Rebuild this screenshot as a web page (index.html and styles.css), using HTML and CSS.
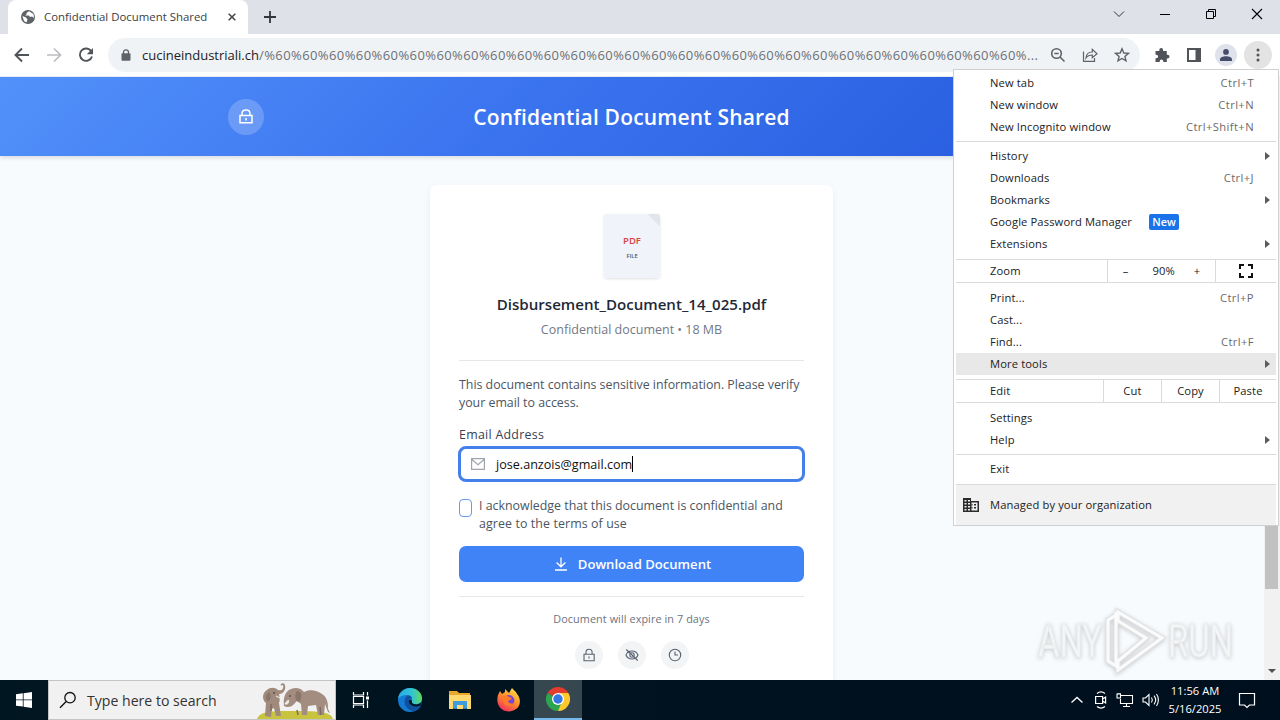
FILE: index.html
```html
<!DOCTYPE html>
<html lang="en">
<head>
  <meta charset="UTF-8" />
  <title>Confidential Document Shared</title>
  <link rel="stylesheet" href="styles.css">
</head>
<body>
  <div class="tabstrip">
    <div class="tab">
      <svg class="globe" width="14" height="14" viewBox="0 0 14 14"><circle cx="7" cy="7" r="7" fill="#5f6368"/><path d="M8 1.2 5.5 3v1.5L4 5.5h4l1 1.5 2-.5 2 1.5-.5-4zM1.4 6 5 7.5l1.5 2L5.500 12.500 3 11z" fill="#fff"/></svg>
      <span class="tab-title">Confidential Document Shared</span>
      <svg class="tab-close" width="8" height="8" viewBox="0 0 8 8"><path d="M.7.700 7.300 7.300M7.300.700.700 7.300" stroke="#45484c" stroke-width="1.6"/></svg>
    </div>
    <svg class="new-tab" width="12" height="12" viewBox="0 0 12 12"><path d="M6 0v12M0 6h12" stroke="#35363a" stroke-width="1.8"/></svg>
    <div class="window-buttons">
      <svg width="12" height="12" viewBox="0 0 12 12"><path d="m1 3.500 5 5 5-5" fill="none" stroke="#333"/></svg>
      <svg width="12" height="12" viewBox="0 0 12 12"><path d="M1 6.500h10" stroke="#000"/></svg>
      <svg width="12" height="12" viewBox="0 0 12 12"><path d="M1.500 3.500h7v7h-7zM3.500 3.500v-2h7v7h-2" fill="none" stroke="#000"/></svg>
      <svg width="12" height="12" viewBox="0 0 12 12"><path d="m1 1 10 10M11 1 1 11" stroke="#000" stroke-width="1.100"/></svg>
    </div>
  </div>

  <div class="toolbar">
    <div class="nav">
      <svg width="16" height="16" viewBox="0 0 16 16"><path d="M15 8H2M8 1.500 1.500 8 8 14.500" fill="none" stroke="#505357" stroke-width="1.900"/></svg>
      <svg width="16" height="16" viewBox="0 0 16 16"><path d="M1 8h13M8 1.500 14.500 8 8 14.500" fill="none" stroke="#bbbdc0" stroke-width="1.700"/></svg>
      <svg width="16" height="16" viewBox="0 0 16 16"><path d="M13.300 4.300A6.200 6.200 0 1 0 14 9.500" fill="none" stroke="#505357" stroke-width="1.900"/><path d="M15 1v6.200H8.800z" fill="#505357"/></svg>
    </div>
    <div class="omnibox">
      <svg class="site-lock" width="10" height="12" viewBox="0 0 10 12"><path d="M2.500 5V3.300a2.500 2.500 0 0 1 5 0V5" fill="none" stroke="#5f6368" stroke-width="1.300"/><rect x=".500" y="4.300" width="9" height="7.400" rx="1" fill="#5f6368"/></svg>
      <div class="url"><span class="host">cucineindustriali.ch</span><span class="path">/%60%60%60%60%60%60%60%60%60%60%60%60%60%60%60%60%60%60%60%60%60%60%60%60%60%60%60%60%...</span></div>
      <div class="omni-icons">
        <svg width="16" height="16" viewBox="0 0 16 16"><circle cx="6.500" cy="6.500" r="4.800" fill="none" stroke="#5f6368" stroke-width="1.600"/><path d="m10 10 4.500 4.500M4.300 6.500h4.400" stroke="#5f6368" stroke-width="1.600"/></svg>
        <svg width="16" height="16" viewBox="0 0 16 16"><path d="M1.500 4.500v9.800h11V11M4 11c.3-4 2.500-6 6.300-6V2.300L15 6.700l-4.700 4V8C7.500 8 5.500 8.800 4 11z" fill="none" stroke="#5f6368" stroke-width="1.200"/></svg>
        <svg width="16" height="16" viewBox="0 0 16 16"><path d="m8 1.800 1.800 4.200 4.600.4-3.500 3 1.100 4.500L8 11.500l-4 2.400 1.100-4.500-3.500-3L6.200 6z" fill="none" stroke="#5f6368" stroke-width="1.400"/></svg>
      </div>
    </div>
    <div class="actions">
      <svg width="16" height="16" viewBox="0 0 16 16"><path d="M1.500 4h3.800V3a1.900 1.900 0 0 1 3.800 0v1h3.700v3.700h.8a1.900 1.900 0 0 1 0 3.800h-.8V15H9.300v-.8a1.800 1.800 0 0 0-3.600 0v.8H1.500v-3.700h.8a1.800 1.800 0 0 0 0-3.600h-.8z" fill="#505458"/></svg>
      <svg width="16" height="16" viewBox="0 0 16 16"><path d="M1 1h14v14H1zM3 3v10h6.500V3z" fill="#505458" fill-rule="evenodd"/></svg>
      <span class="avatar"><svg width="14" height="14" viewBox="0 0 14 14"><circle cx="7" cy="3.900" r="2.900" fill="#474d69"/><path d="M1 13v-1.500C1 9.500 4 8.300 7 8.300s6 1.200 6 3.200V13z" fill="#474d69"/></svg></span>
      <span class="kebab"><svg width="4" height="14" viewBox="0 0 4 14"><circle cx="2" cy="2" r="1.500"/><circle cx="2" cy="7" r="1.500"/><circle cx="2" cy="12" r="1.500"/></svg></span>
    </div>
  </div>

  <div class="viewport">
    <div class="page">
      <header class="page-header">
        <span class="header-lock"><svg width="16" height="16" viewBox="0 0 16 16"><path d="M2 6.500h12v7.300H2zM4 6.500V4.600C4 2.400 5.500 1 8 1s4 1.400 4 3.600v1.900M8 9v2.600" fill="none" stroke="#fff" stroke-width="1.500"/></svg></span>
        <h1>Confidential Document Shared</h1>
      </header>

      <main class="card">
        <div class="file-icon">
          <span class="file-type">PDF</span>
          <span class="file-label">FILE</span>
        </div>
        <h2>Disbursement_Document_14_025.pdf</h2>
        <p class="meta">Confidential document • 18 MB</p>

        <div class="form">
          <p class="intro">This document contains sensitive information. Please verify<br>your email to access.</p>
          <div class="label">Email Address</div>
          <div class="email">
            <svg width="14" height="14" viewBox="0 0 14 14"><path d="M.600 1.600h12.800v10.800H.600zM.600 2.200 7 7.600l6.400-5.400" fill="none" stroke="#a0a4ab" stroke-width="1.200"/></svg>
            <span class="email-value">jose.anzois@gmail.com</span><span class="caret"></span>
          </div>
          <div class="consent">
            <span class="checkbox"></span>
            <p>I acknowledge that this document is confidential and<br><span class="terms">agree to the terms of use</span></p>
          </div>
          <button class="download">
            <svg width="14" height="14" viewBox="0 0 14 14"><path d="M7 .500v9M2.600 5.500 7 9.800l4.400-4.300M1 13h12" fill="none" stroke="#fff" stroke-width="1.300"/></svg>
            <span>Download Document</span>
          </button>
        </div>

        <p class="expire">Document will expire in 7 days</p>
        <div class="badges">
          <span><svg width="14" height="14" viewBox="0 0 14 14"><path d="M2 6.200h10.200v6.600H2zM4 6V4.200C4 2.300 5.100 1.200 7 1.200s3.100 1.100 3.100 3V6M7 8.600v2"/></svg></span>
          <span><svg width="14" height="14" viewBox="0 0 14 14"><path d="M1 7c2-5.300 10-5.300 12 0-2 5.300-10 5.300-12 0zM1.300 1.500l11.400 11"/><circle cx="7" cy="7" r="2.200"/></svg></span>
          <span><svg width="14" height="14" viewBox="0 0 14 14"><circle cx="7" cy="7" r="5.700"/><path d="M7 3.500V7h3"/></svg></span>
        </div>
      </main>
    </div>
    <div class="scrollbar">
      <div class="thumb"></div>
      <div class="scroll-down"></div>
    </div>
  </div>

  <svg class="watermark" width="216" height="72" viewBox="0 0 216 72">
    <g class="mark-text">
      <text x="4" y="51" textLength="64" lengthAdjust="spacingAndGlyphs">ANY</text>
      <text x="134" y="51" textLength="65" lengthAdjust="spacingAndGlyphs">RUN</text>
    </g>
    <path class="mark-edge" d="M82 6v54l-8-5V14l8-5M84 6l44 26-44 32v-9l28-23-28-17z"/>
    <path class="mark-line" d="M82 6v54l-8-5V14l8-5M84 6l44 26-44 32v-9l28-23-28-17z"/>
  </svg>

  <div class="menu">
    <div class="group first">
      <div class="row">New tab<kbd>Ctrl+T</kbd></div>
      <div class="row">New window<kbd>Ctrl+N</kbd></div>
      <div class="row">New Incognito window<kbd>Ctrl+Shift+N</kbd></div>
    </div>
    <div class="group second">
      <div class="row">History<i class="arrow"></i></div>
      <div class="row">Downloads<kbd>Ctrl+J</kbd></div>
      <div class="row">Bookmarks<i class="arrow"></i></div>
      <div class="row">Google Password Manager<span class="new">New</span></div>
      <div class="row">Extensions<i class="arrow"></i></div>
    </div>
    <div class="split">
      <span class="split-label">Zoom</span>
      <span class="zoom-controls"><b>–</b><b class="percent">90%</b><b>+</b></span>
      <span class="fullscreen"><svg width="14" height="14" viewBox="0 0 14 14"><path d="M1 5V1h4M9 1h4v4M13 9v4H9M5 13H1V9" fill="none" stroke="#111" stroke-width="2"/></svg></span>
    </div>
    <div class="group">
      <div class="row">Print...<kbd>Ctrl+P</kbd></div>
      <div class="row">Cast...</div>
      <div class="row">Find...<kbd>Ctrl+F</kbd></div>
      <div class="row active">More tools<i class="arrow"></i></div>
    </div>
    <div class="split">
      <span class="split-label">Edit</span>
      <span class="edit-item">Cut</span>
      <span class="edit-item">Copy</span>
      <span class="edit-item">Paste</span>
    </div>
    <div class="group third">
      <div class="row">Settings</div>
      <div class="row">Help<i class="arrow"></i></div>
    </div>
    <div class="group last">
      <div class="row">Exit</div>
    </div>
    <div class="managed">
      <svg width="16" height="14" viewBox="0 0 16 14"><path d="M0 0h8v3h8v11H0z" fill="#2b2b2b"/><path d="M1.500 2h2v1.500h-2zM5 2h2v1.500H5zM1.500 5h2v1.500h-2zM5 5h2v1.500H5zM1.500 8h2v1.500h-2zM5 8h2v1.500H5zM1.500 11h2v1.500h-2zM5 11h2v1.500H5zM8.500 4.500h6v8h-6z" fill="#f1f1f1"/><path d="M8.500 6h1v1.500h-1zM11 6h2v1.500h-2zM8.500 9h1v1.500h-1zM11 9h2v1.500h-2z" fill="#2b2b2b"/></svg>
      <span>Managed by your organization</span>
    </div>
  </div>

  <div class="taskbar">
    <div class="start"><svg width="16" height="16" viewBox="0 0 16 16"><path d="M0 2.300 6.800 1.300v6.200H0zM7.600 1.200 16 0v7.500H7.600zM0 8.300h6.800v6.300L0 13.700zM7.600 8.300H16V16l-8.400-1.200z" fill="#fff"/></svg></div>
    <div class="search">
      <svg width="18" height="18" viewBox="0 0 18 18"><circle cx="11" cy="6.700" r="5.200" fill="none" stroke="#111" stroke-width="1.300"/><path d="M7.200 10.500 1 16.800" stroke="#111" stroke-width="1.400"/></svg>
      <span>Type here to search</span>
      <svg class="elephants" width="78" height="38" viewBox="0 0 78 38">
        <path d="M0 38c3-8 14-8 36-8s38 0 40 8z" fill="#c9c43f"/>
        <path d="M8 35 9 22C4 18 6 11 10 9c3-3 8-3 11 0 4 1 6-1 5-5-2 1-3 0-2-1 3-2 5 1 4 5-1 4-4 5-6 5 1 4 1 7 0 9l2 13h-5l-2-8-2 1-1 8z" fill="#a08a7c"/>
        <path d="M27 24c-1-6 1-14 7-16 5-2 10-1 13 3 5-3 13-2 18 2 6 4 6 10 6 15l2 4-2-1-3-8-1 11h-6l-2-10-8 1-1 9h-5l-1-11-4-3c-3 3-5 6-9 6-3 0-5-1-4-3 2 1 4 1 5-2l-1-2c-2 1-3 3-4 5z" fill="#a28d80"/>
        <path d="M12 11c-3 2-4 6-2 9 4 0 5-5 2-9zM40 10c5 0 6 7 2 11-4-1-5-7-2-11z" fill="#8a766b"/>
        <path d="m40 29 1 5M63 26l1 8M14 23v7" stroke="#806c61" stroke-width="1.500"/>
        <path d="m19 15 4 2M32 19l-2 4" stroke="#eee4d4" stroke-width="1.200"/>
        <circle cx="17" cy="12" r=".8" fill="#322"/><circle cx="33" cy="15" r=".8" fill="#322"/>
      </svg>
    </div>
    <div class="apps">
      <div class="app"><svg width="18" height="16" viewBox="0 0 18 16"><path d="M1.500 0v3h10V0M1.500 16v-3h10v3M1.500 4.500h10v7h-10zM15.500 0v3.500M15.500 8.500V16" fill="none" stroke="#fff" stroke-width="1.200"/><path d="M14 4.500h3v3h-3z" fill="#fff"/></svg></div>
      <div class="app"><svg width="24" height="24" viewBox="0 0 24 24">
        <defs>
          <linearGradient id="edgeTop" x1="0" x2="1"><stop stop-color="#28a9e8"/><stop offset=".6" stop-color="#33c5cf"/><stop offset="1" stop-color="#63d957"/></linearGradient>
        </defs>
        <circle cx="12" cy="12" r="12" fill="#1479d1"/>
        <path d="M0 11C1 4 6 0 12 0c7 0 12 5 12 10 0 4-3 6-6 6-3 0-5-1-4-3 1-3-1-6-5-6-4 0-8 2-9 4z" fill="url(#edgeTop)"/>
        <path d="M9 8c-5 4-2 14 6 15 4 0 6-2 8-5-6 3-12 0-12-5 0-2 1-3 3-3-1-2-3-3-5-2z" fill="#0f519f"/>
        <path d="M11 12c-1 5 5 8 11 6l2-4c-3 3-8 3-10 1 0-2 0-4-3-3z" fill="#001620"/>
      </svg></div>
      <div class="app"><svg width="22" height="20" viewBox="0 0 22 20"><path d="M0 1h8l2 2h11v16H0z" fill="#e9a72b"/><path d="M0 5h22v14H0z" fill="#ffd970"/><path d="M4 11h14v8h-4v-4H8v4H4z" fill="#3f9bdc"/><path d="M4 18h4v1H4zM14 18h4v1h-4z" fill="#277bbd"/></svg></div>
      <div class="app"><svg width="24" height="24" viewBox="0 0 24 24">
        <defs><linearGradient id="fox" x1=".8" y1="0" x2=".2" y2="1"><stop stop-color="#ffe34a"/><stop offset=".45" stop-color="#ff9229"/><stop offset="1" stop-color="#f12862"/></linearGradient></defs>
        <path d="M1 7 3 3l2 3 3-2V1l4 4 3-5c2 3 4 3 5 6 4 4 4 12-1 15-5 4-14 3-17-3C0 15 0 10 1 7z" fill="url(#fox)"/>
        <circle cx="12" cy="12.500" r="5.400" fill="#7447d9"/><path d="M4 9c3-2 6-2 8 0l3 1c-1 2-3 2-4 3 1 3 4 3 6 2-2 5-10 4-11-2z" fill="#ff7b27"/>
      </svg></div>
      <div class="app current"><svg width="24" height="24" viewBox="0 0 24 24">
        <path d="M12 12 1.600 6a12 12 0 0 1 20.800 0z" fill="#e33b2e"/><path d="M12 12 1.600 6A12 12 0 0 0 12 24l5-9z" fill="#2da44e"/><path d="M12 12h5l-5 12A12 12 0 0 0 22.400 6H12z" fill="#fdc92f"/>
        <circle cx="12" cy="12" r="6" fill="#fff"/><circle cx="12" cy="12" r="4.700" fill="#3478e5"/>
      </svg></div>
    </div>
    <div class="tray">
      <svg width="14" height="16" viewBox="0 0 14 16"><path d="m1.500 10.500 5.500-5 5.500 5" fill="none" stroke="#fff" stroke-width="1.300"/></svg>
      <svg width="14" height="18" viewBox="0 0 14 18"><path d="M3 2.500c2.500-2 5.500-2 8 0M3 15.500c2.500 2 5.500 2 8 0M1.600 5.500h7v7h-7zM8.600 8l3-2v6l-3-2" fill="none" stroke="#fff" stroke-width="1.200"/></svg>
      <svg width="18" height="16" viewBox="0 0 18 16"><path d="M5 3.500h11.500v8H4.500V7M10.500 11.500v3M7 14.500h7M1 2v4h3.500V2zM2 1v1M4 1v1" fill="none" stroke="#fff" stroke-width="1.100"/></svg>
      <svg width="18" height="16" viewBox="0 0 18 16"><path d="M1 6h2.500L7 2.500v11L3.500 10H1zM9.500 5.500c1 1.500 1 3.500 0 5M12 3.700c2 2.500 2 6 0 8.600M14.500 2c2.500 3.500 2.500 8.500 0 12" fill="none" stroke="#fff" stroke-width="1.100"/></svg>
      <div class="clock"><span>11:56 AM</span><span>5/16/2025</span></div>
      <svg class="notify" width="18" height="18" viewBox="0 0 18 18"><path d="M1.500 2.500h15v11.500h-5L9 16.500 6.500 14h-5z" fill="none" stroke="#fff" stroke-width="1.200"/></svg>
    </div>
  </div>
</body>
</html>
```
FILE: styles.css
```css
* {
  box-sizing: border-box;
}

body {
  margin: 0;
  width: 1280px;
  height: 720px;
  overflow: hidden;
  position: relative;
  display: flex;
  flex-direction: column;
  font-family: "Open Sans", "Noto Sans", sans-serif;
  font-size: 11.2px;
  color: #202124;
}

svg {
  display: block;
  flex: none;
}

h1, h2, p {
  margin: 0;
  white-space: nowrap;
}

/* browser window */
.tabstrip {
  height: 34px;
  background: #dee1e8;
  display: flex;
  align-items: center;
  padding-left: 8px;
}

.tab {
  width: 240px;
  height: 34px;
  background: #fff;
  border-radius: 8px 8px 0 0;
  display: flex;
  align-items: center;
  padding: 0 12px 0 13px;
}

.tab-title {
  margin: -1px 0 0 9px;
  width: 184px;
  font-size: 11.4px;
  white-space: nowrap;
  color: #3c4043;
}

.new-tab {
  margin-left: 16px;
}

.window-buttons {
  margin: -6px 17px 0 auto;
  display: flex;
  gap: 34px;
}

.toolbar {
  height: 43px;
  background: #fff;
  border-bottom: 1px solid #e4ebf2;
  display: flex;
  align-items: center;
  padding: 0 7px 0 14px;
}

.nav {
  display: flex;
  gap: 16px;
}

.omnibox {
  margin-left: 14px;
  width: 1032px;
  height: 34px;
  border-radius: 17px;
  background: #f0f3f6;
  display: flex;
  align-items: center;
  padding: 0 10px 0 13px;
}

.url {
  margin-left: 11px;
  width: 908px;
  font-size: 13px;
  white-space: nowrap;
  color: #6b7075;
}

.host {
  color: #202124;
}

.path {
  letter-spacing: 0.41px;
}

.omni-icons {
  display: flex;
  gap: 16px;
}

.actions {
  margin-left: 14px;
  display: flex;
  align-items: center;
  gap: 16px;
}

.avatar, .kebab {
  display: flex;
  align-items: center;
  justify-content: center;
  border-radius: 50%;
}

.avatar {
  width: 22px;
  height: 22px;
  margin-left: -3px;
  background: #dfe2eb;
}

.kebab {
  width: 28px;
  height: 28px;
  margin-left: -9px;
  background: #e3e3e4;
  fill: #505458;
}

.viewport {
  height: 603px;
  display: flex;
  overflow: hidden;
}

.page {
  width: 1264px;
  background: #f8fbfe;
}

.scrollbar {
  width: 16px;
  background: #f1f1f1;
  display: flex;
  flex-direction: column;
  align-items: center;
  justify-content: space-between;
  padding: 0 1px 7px 0;
}

.thumb {
  width: 13px;
  height: 512px;
  background: #c1c1c1;
}

.scroll-down {
  border: 4px solid transparent;
  border-top-color: #505050;
  border-bottom: 0;
}

/* shared document page */
.page-header {
  height: 79px;
  background: linear-gradient(135deg, #5291fa, #3b74ef 40%, #2054d8);
  box-shadow: 0 2px 4px rgba(0,0,0,0.12);
  display: grid;
  grid-template-columns: 228px 1fr 264px;
  align-items: center;
  position: relative;
}

.header-lock {
  grid-column: 2;
  grid-row: 1;
  width: 36px;
  height: 36px;
  border-radius: 50%;
  background: rgba(255,255,255,0.2);
  display: flex;
  align-items: center;
  justify-content: center;
}

.page-header h1 {
  grid-column: 1 / -1;
  grid-row: 1;
  padding-right: 1px;
  text-align: center;
  font-size: 21px;
  letter-spacing: 0.18px;
  font-weight: 600;
  color: #fff;
}

.card {
  width: 403px;
  height: 560px;
  margin: 29px 0 0 430px;
  padding: 29px;
  background: #fff;
  border-radius: 7px;
  box-shadow: 0 3px 8px rgba(30,60,100,0.07);
  display: flex;
  flex-direction: column;
  align-items: center;
}

.file-icon {
  width: 56px;
  height: 64px;
  margin-left: 1px;
  background: linear-gradient(225deg, #e2e5e9 9px, #f0f3f9 9px);
  border-radius: 3px;
  box-shadow: 0 1px 3px rgba(0,0,0,0.12);
  display: flex;
  flex-direction: column;
  align-items: center;
  padding-top: 20px;
}

.file-type {
  font-size: 9.5px;
  line-height: 14px;
  font-weight: 600;
  color: #d64545;
}

.file-label {
  font-size: 5.8px;
  line-height: 16px;
  font-weight: 600;
  color: #4b5563;
}

.card h2 {
  margin-top: 15px;
  line-height: 22px;
  font-size: 15.1px;
  font-weight: 600;
  color: #1f2937;
}

.meta {
  margin-top: 6px;
  line-height: 18px;
  font-size: 12.5px;
  color: #737985;
}

.form {
  width: 345px;
  margin-top: 21px;
  padding: 15px 0 14px;
  border-top: 1px solid #e5e7eb;
  border-bottom: 1px solid #e5e7eb;
}

.intro, .consent p {
  font-size: 12.4px;
  line-height: 18px;
  color: #4b5563;
}

.intro {
  letter-spacing: -0.02px;
}

.label {
  margin-top: 14px;
  line-height: 18px;
  font-size: 12.4px;
  letter-spacing: 0.28px;
  color: #374151;
}

.email {
  height: 36px;
  margin: 2px -1px 0;
  border: 3px solid #4480ea;
  border-radius: 8px;
  display: flex;
  align-items: center;
  padding-left: 10px;
  color: #111;
}

.email-value {
  margin-left: 11px;
  font-size: 12.6px;
}

.caret {
  width: 1px;
  height: 16px;
  background: #000;
}

.consent {
  margin-top: 15px;
  display: flex;
  gap: 7px;
}

.terms {
  letter-spacing: 0.1px;
}

.checkbox {
  width: 13px;
  height: 18px;
  margin-top: 2px;
  border: 1px solid #6a9be8;
  border-radius: 4px;
  flex: none;
}

.download {
  width: 100%;
  height: 36px;
  margin-top: 13px;
  padding: 0 0 0 2px;
  border: none;
  border-radius: 7px;
  background: #3f83f7;
  color: #fff;
  font-family: inherit;
  font-size: 13.1px;
  font-weight: 600;
  display: flex;
  align-items: center;
  justify-content: center;
  gap: 10px;
}

.expire {
  margin-top: 13px;
  line-height: 18px;
  font-size: 10.8px;
  letter-spacing: 0.1px;
  color: #6b7280;
}

.badges {
  margin-top: 13px;
  display: flex;
  gap: 15px;
}

.badges span {
  width: 28px;
  height: 28px;
  border-radius: 50%;
  background: #f3f4f6;
  display: flex;
  align-items: center;
  justify-content: center;
}

.badges svg {
  fill: none;
  stroke: #596170;
  stroke-width: 1.1;
}

.watermark {
  position: absolute;
  left: 1034px;
  top: 606px;
  filter: drop-shadow(0 1px 2px rgba(0,0,0,0.2));
}

.mark-text {
  font-family: Roboto, sans-serif;
  font-size: 47px;
  fill: #f4f5f6;
  stroke: #e9ebec;
  stroke-width: 1;
}

.mark-edge {
  fill: none;
  stroke: #dfe1e3;
  stroke-width: 5;
}

.mark-line {
  fill: none;
  stroke: #fbfbfb;
  stroke-width: 3;
}

/* browser menu */
.menu {
  position: absolute;
  left: 953px;
  top: 69px;
  width: 326px;
  height: 457px;
  background: #fff;
  border: 1px solid #d0d0d0;
  padding: 2px 2px 0;
  letter-spacing: 0.12px;
}

.group {
  padding: 4px 0;
}

.first {
  padding: 0 0 3px;
}

.second {
  border-top: 1px solid #dadada;
  padding-top: 3px;
}

.third {
  padding-bottom: 3px;
}

.last {
  border-top: 1px solid #dadada;
  padding-top: 3px;
}

.row {
  height: 22px;
  display: flex;
  align-items: center;
  padding: 0 22px 2px 34px;
}

.row kbd {
  margin-left: auto;
  font-family: inherit;
  font-size: 11.2px;
  letter-spacing: 0.4px;
  color: #6a6a6a;
}

.active {
  background: #e8e8e8;
}

.arrow {
  margin: 1px -16px 0 auto;
  border: 4px solid transparent;
  border-left: 5px solid #5c5c5c;
  border-right: 0;
}

.new {
  margin: 1px 0 0 17px;
  width: 30px;
  line-height: 16px;
  border-radius: 2px;
  background: #1a73e8;
  color: #fff;
  font-weight: 600;
  font-size: 10.8px;
  text-align: center;
}

.split {
  height: 24px;
  border-top: 1px solid #dadada;
  border-bottom: 1px solid #dadada;
  display: flex;
}

.split span {
  display: flex;
  align-items: center;
  justify-content: center;
  padding-bottom: 2px;
}

.split .split-label {
  flex: 1;
  justify-content: flex-start;
  padding-left: 34px;
}

.zoom-controls {
  width: 108px;
  border-left: 1px solid #dadada;
}

.zoom-controls b {
  font-weight: 400;
}

.zoom-controls .percent {
  margin: 0 19px 0 24px;
}

.split .fullscreen {
  width: 61px;
  padding-bottom: 0;
  border-left: 1px solid #dadada;
}

.edit-item {
  width: 58px;
  border-left: 1px solid #dadada;
}

.edit-item:last-child {
  width: 57px;
}

.managed {
  height: 41px;
  border-top: 1px solid #dadada;
  background: #f1f1f1;
  display: flex;
  align-items: center;
  gap: 11px;
  padding-left: 7px;
}

.managed span {
  margin-top: -2px;
}

/* taskbar */
.taskbar {
  height: 40px;
  background: linear-gradient(90deg, #001620, #000f1e);
  display: flex;
  color: #fff;
}

.start {
  width: 48px;
  display: flex;
  align-items: center;
  justify-content: center;
}

.search {
  width: 288px;
  background: #f1f1f1;
  border: 1px solid #c4c4c4;
  display: flex;
  align-items: center;
  padding-left: 10px;
  color: #333;
  font-size: 14.1px;
}

.search span {
  margin-left: 10px;
}

.elephants {
  margin-left: auto;
}

.apps {
  display: flex;
}

.app {
  width: 49.5px;
  display: flex;
  align-items: center;
  justify-content: center;
}

.current {
  width: 48px;
  background: #37474f;
  border-bottom: 2px solid #76b9ed;
}

.tray {
  margin-left: auto;
  display: flex;
  align-items: center;
  padding-right: 24px;
  gap: 8px;
}

.tray svg:first-child {
  margin-right: 2px;
}

.clock {
  width: 54px;
  display: flex;
  flex-direction: column;
  align-items: center;
  line-height: 18px;
  white-space: nowrap;
}

.notify {
  margin-left: 8px;
}
```
